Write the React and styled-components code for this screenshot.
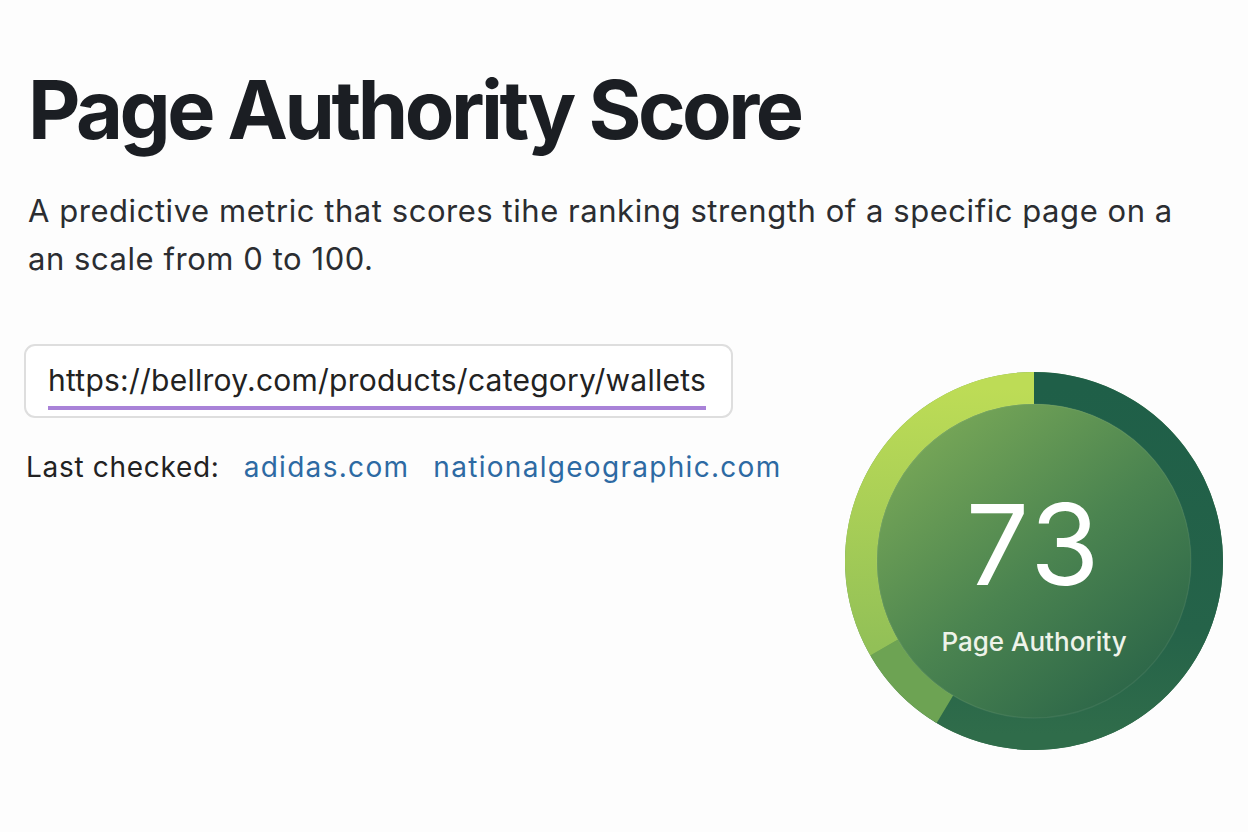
import React from 'react';
import styled, { createGlobalStyle } from 'styled-components';

const GlobalStyle = createGlobalStyle`
  html, body {
    margin: 0;
    padding: 0;
    background: #fdfdfd;
  }
  body {
    font-family: Inter, "Noto Sans", "Liberation Sans", sans-serif;
    color: #1c1f24;
  }
`;

const Page = styled.main`
  width: 1248px;
  height: 832px;
  box-sizing: border-box;
  padding: 58px 24px 0 24px;
  overflow: hidden;
`;

const Title = styled.h1`
  margin: 0 0 0 4px;
  font-size: 81px;
  line-height: 104px;
  font-weight: 700;
  letter-spacing: -3.5px;
  color: #1b1e23;
`;

const Lead = styled.p`
  margin: 25px 0 0 4px;
  max-width: 1180px;
  font-size: 31px;
  line-height: 48px;
  font-weight: 400;
  letter-spacing: 0.55px;
  color: #2b2d31;
`;

const Row = styled.section`
  display: flex;
  align-items: flex-start;
  margin-top: 61px;
`;

const Left = styled.div`
  width: 822px;
  display: flex;
  flex-direction: column;
`;

const UrlBox = styled.div`
  width: 709px;
  height: 74px;
  box-sizing: border-box;
  border: 2px solid #dedede;
  border-radius: 11px;
  background: #fff;
  padding: 16px 0 0 22px;
`;

const UrlText = styled.span`
  display: inline-block;
  font-size: 30px;
  line-height: 36px;
  letter-spacing: 0.25px;
  color: #222;
  padding-bottom: 8px;
  border-bottom: 4px solid #a982d8;
`;

const Checked = styled.div`
  display: flex;
  align-items: baseline;
  gap: 24px;
  margin: 32px 0 0 2px;
  font-size: 28px;
  line-height: 34px;
  letter-spacing: 0.7px;
  color: #222;
`;

const Link = styled.a`
  color: #2d6aa3;
  text-decoration: none;
  letter-spacing: 1.3px;
`;

const Gauge = styled.div`
  position: relative;
  width: 380px;
  height: 380px;
  margin-top: 27px;
`;

const GaugeLabel = styled.div`
  position: absolute;
  inset: 0;
  display: flex;
  flex-direction: column;
  align-items: center;
  justify-content: center;
  color: #fff;
  padding-top: 22px;
`;

const Score = styled.div`
  font-size: 112px;
  line-height: 112px;
  font-weight: 400;
  letter-spacing: 3px;
`;

const ScoreCaption = styled.div`
  margin-top: 26px;
  font-size: 26px;
  font-weight: 500;
  color: #eef3ea;
`;

const C = 190;
const R = 173;

function point(deg, r = R) {
  const a = (deg - 90) * Math.PI / 180;
  return [C + r * Math.cos(a), C + r * Math.sin(a)];
}

function arc(start, end) {
  const [x1, y1] = point(start);
  const [x2, y2] = point(end);
  const large = end - start > 180 ? 1 : 0;
  return `M ${x1} ${y1} A ${R} ${R} 0 ${large} 1 ${x2} ${y2}`;
}

function ScoreGauge({ value, label }) {
  return (
    <Gauge>
      <svg width="380" height="380" viewBox="0 0 380 380">
        <defs>
          <linearGradient id="disc" x1="0.15" y1="0.1" x2="0.85" y2="0.95">
            <stop offset="0" stopColor="#76a657" />
            <stop offset="0.5" stopColor="#4b8450" />
            <stop offset="1" stopColor="#2a6448" />
          </linearGradient>
          <linearGradient id="light" x1="0" y1="0" x2="0" y2="1">
            <stop offset="0" stopColor="#bddc56" />
            <stop offset="1" stopColor="#92c057" />
          </linearGradient>
          <linearGradient id="dark" x1="0" y1="0" x2="0" y2="1">
            <stop offset="0" stopColor="#1f5f48" />
            <stop offset="0.7" stopColor="#256349" />
            <stop offset="1" stopColor="#2f6c4a" />
          </linearGradient>
        </defs>
        <circle cx={C} cy={C} r={189} fill="url(#disc)" />
        <path d={arc(0, 212)} stroke="url(#dark)" strokeWidth="32" fill="none" />
        <path d={arc(211, 240)} stroke="#6da353" strokeWidth="32" fill="none" />
        <path d={arc(240, 360)} stroke="url(#light)" strokeWidth="32" fill="none" />
        <circle cx={C} cy={C} r={157} fill="url(#disc)" />
        <circle cx={C} cy={C} r={157} fill="none" stroke="#ffffff" strokeOpacity="0.06" strokeWidth="1.5" />
      </svg>
      <GaugeLabel>
        <Score>{value}</Score>
        <ScoreCaption>{label}</ScoreCaption>
      </GaugeLabel>
    </Gauge>
  );
}

export default function App() {
  return (
    <>
      <GlobalStyle />
      <Page>
        <Title>Page Authority Score</Title>
        <Lead>
          A predictive metric that scores tihe ranking strength of a specific page on a an scale from 0 to 100.
        </Lead>
        <Row>
          <Left>
            <UrlBox>
              <UrlText>https://bellroy.com/products/category/wallets</UrlText>
            </UrlBox>
            <Checked>
              <span>Last checked:</span>
              <Link href="#">adidas.com</Link>
              <Link href="#">nationalgeographic.com</Link>
            </Checked>
          </Left>
          <ScoreGauge value="73" label="Page Authority" />
        </Row>
      </Page>
    </>
  );
}
